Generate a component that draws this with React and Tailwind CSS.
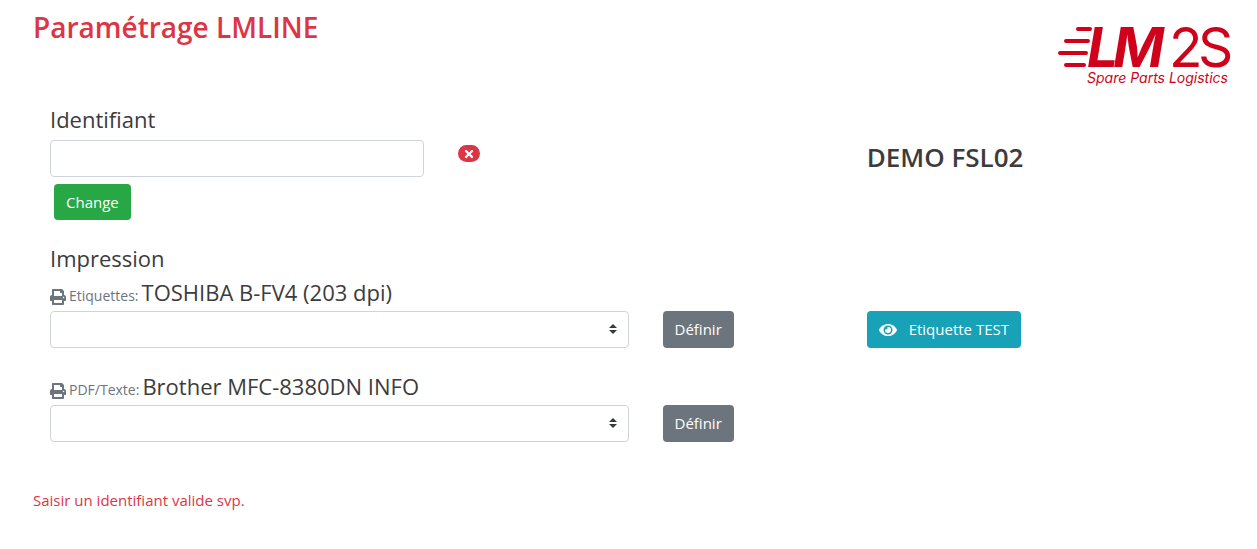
import React from "react";
import { FaPrint, FaEye, FaTimes } from "react-icons/fa";

function Logo() {
  return (
    <svg className="h-21 w-44 shrink-0 text-[#d0021b]" viewBox="0 -16 176 84" role="img" aria-label="LM2S Spare Parts Logistics">
      <g stroke="currentColor" strokeWidth="4" strokeLinecap="round">
        <path d="M21 5H33M9 17H31M3 29H29M9 41H27" />
      </g>
      <g fill="currentColor" fontFamily="Inter, sans-serif">
        <text x="30" y="43" fontSize="55" fontWeight="700" fontStyle="italic">L</text>
        <text x="56" y="43" fontSize="55" fontWeight="700" fontStyle="italic">M</text>
        <text x="112" y="43" fontSize="55" fontWeight="400">2</text>
        <text x="141" y="43" fontSize="55" fontWeight="400">S</text>
        <text x="30" y="59" fontSize="14" fontStyle="italic">Spare Parts Logistics</text>
      </g>
    </svg>
  );
}

function PrinterSelect({ id, label, printer }) {
  return (
    <>
      <div className="col-span-6">
        <label htmlFor={id} className="flex h-9 items-baseline gap-[3px] leading-[34px] whitespace-nowrap">
          <span className="text-[14px] text-[#6c757d]">
            <FaPrint className="mr-[3px] inline size-4 align-middle" />
            {label}
          </span>
          <span className="text-[22px]">{printer}</span>
        </label>
        <div className="relative">
          <select id={id} className="block h-[37px] w-full appearance-none rounded border border-[#ced4da] bg-white px-3" />
          <svg className="pointer-events-none absolute top-3 right-3 h-3 w-2" viewBox="0 0 4 5" fill="#343a40" aria-hidden="true">
            <path d="M2 0L0 2h4zm0 5L0 3h4z" />
          </svg>
        </div>
      </div>
      <div className="col-span-2 pt-9">
        <button type="button" className="h-[37px] rounded bg-[#6c757d] px-3 text-white">Définir</button>
      </div>
    </>
  );
}

export default function App() {
  return (
    <main className="bg-white pb-9 font-['Open_Sans','Noto_Sans',sans-serif] text-[15px] text-[#3c3c3c]">
      <header className="flex items-start justify-between pt-2 pr-6 pl-[33px]">
        <h1 className="text-[28px] leading-[38px] font-semibold text-[#dc3545]">Paramétrage LMLINE</h1>
        <Logo />
      </header>

      <form className="pr-4 pl-[50px]">
        <section className="grid grid-cols-12 gap-x-[34px] pt-3">
          <div className="col-span-4">
            <label htmlFor="identifiant" className="block h-9 text-[22px] leading-[30px]">Identifiant</label>
            <input id="identifiant" type="text" className="block h-[37px] w-full rounded border border-[#ced4da] px-3" />
            <button type="button" className="mt-[7px] ml-1 h-9 rounded bg-[#28a745] px-3 text-white">Change</button>
          </div>
          <div className="col-span-4 pt-[41px]">
            <span className="flex h-[17px] w-[22px] items-center justify-center rounded-full bg-[#dc3545] text-white">
              <FaTimes className="size-3" />
            </span>
          </div>
          <h2 className="col-span-4 pt-9 text-[26px] leading-[34px] font-semibold">DEMO FSL02</h2>
        </section>

        <h2 className="mt-[23px] h-8 text-[22px] leading-[30px]">Impression</h2>
        <section className="grid grid-cols-12 gap-x-[34px] gap-y-[21px]">
          <PrinterSelect id="etiquettes" label="Etiquettes:" printer="TOSHIBA B-FV4 (203 dpi)" />
          <div className="col-span-4 pt-9">
            <button type="button" className="flex h-[37px] items-center gap-3 rounded bg-[#17a2b8] px-3 text-white">
              <FaEye className="size-[18px]" />
              Etiquette TEST
            </button>
          </div>
          <PrinterSelect id="pdf" label="PDF/Texte:" printer="Brother MFC-8380DN INFO" />
        </section>
      </form>

      <p className="pt-[46px] pl-[33px] leading-6 text-[#dc3545]">Saisir un identifiant valide svp.</p>
    </main>
  );
}
